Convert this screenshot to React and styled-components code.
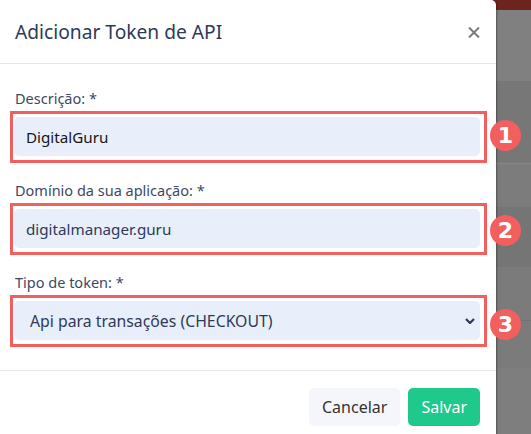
import React from 'react'
import styled, { createGlobalStyle } from 'styled-components'

const GlobalStyle = createGlobalStyle`
  html, body {
    margin: 0;
    padding: 0;
    overflow: hidden;
  }
  body {
    font-family: 'Noto Sans', 'Open Sans', sans-serif;
  }
`

const stripes = [
  { h: 10, c: '#6d231e' },
  { h: 71, c: '#808080' },
  { h: 82, c: '#777777' },
  { h: 1, c: '#858585' },
  { h: 43, c: '#7c7c7c' },
  { h: 60, c: '#757575' },
  { h: 53, c: '#7b7b7b' },
  { h: 1, c: '#727272' },
  { h: 47, c: '#7b7b7b' },
  { h: 66, c: '#7e7e7e' },
]

const fields = [
  { id: 1, label: 'Descrição: *', value: 'DigitalGuru', dark: true, badgeTop: 3 },
  { id: 2, label: 'Domínio da sua aplicação: *', value: 'digitalmanager.guru', badgeTop: 6 },
  { id: 3, label: 'Tipo de token: *', value: 'Api para transações (CHECKOUT)', select: true, badgeTop: 8 },
]

const App = () => {
  return (
    <Page>
      <GlobalStyle />
      <Backdrop>
        {stripes.map((s, i) => (
          <Stripe key={i} style={{ height: s.h, background: s.c }} />
        ))}
      </Backdrop>
      <Modal>
        <Header>
          <Title>Adicionar Token de API</Title>
          <Close aria-label='fechar'>
            <svg width='12' height='11' viewBox='0 0 12 11'>
              <path d='M1 0.5 L11 10.5 M11 0.5 L1 10.5' stroke='#7a7a7a' strokeWidth='2' />
            </svg>
          </Close>
        </Header>
        <Body>
          {fields.map((f) => (
            <Field key={f.id}>
              <Label>{f.label}</Label>
              <Control>
                {f.select ? (
                  <SelectBox role='combobox'>
                    <span>{f.value}</span>
                    <svg width='10' height='6' viewBox='0 0 10 6'>
                      <path d='M1 1 L5 5 L9 1' fill='none' stroke='#2e3a59' strokeWidth='2.2' />
                    </svg>
                  </SelectBox>
                ) : (
                  <Input readOnly defaultValue={f.value} $dark={f.dark} />
                )}
                <Highlight />
                <Badge $top={f.badgeTop}>{f.id}</Badge>
              </Control>
            </Field>
          ))}
        </Body>
        <Footer>
          <Button>Cancelar</Button>
          <Button $primary>Salvar</Button>
        </Footer>
      </Modal>
    </Page>
  )
}

const Page = styled.div`
  position: relative;
  width: 531px;
  height: 434px;
  overflow: hidden;
`
const Backdrop = styled.div`
  display: flex;
  flex-direction: column;
  width: 100%;
  height: 100%;
`
const Stripe = styled.div`
  flex: none;
  width: 100%;
`
const Modal = styled.div`
  position: absolute;
  top: 0;
  left: -2px;
  width: 498px;
  background: #ffffff;
  border-top-right-radius: 5px;
  box-shadow: 1px 0 2px rgba(0, 0, 0, 0.35);
`
const Header = styled.div`
  display: flex;
  align-items: center;
  justify-content: space-between;
  padding: 0 16px 0 17px;
  border-bottom: 1px solid #e4e4ee;
  box-sizing: border-box;
  height: 64px;
`
const Title = styled.h5`
  margin: 0;
  font-size: 19.2px;
  font-weight: 400;
  color: #2e3a59;
`
const Close = styled.button`
  border: none;
  background: none;
  padding: 0;
  display: flex;
  margin-top: 1px;
`
const Body = styled.div`
  display: flex;
  flex-direction: column;
  gap: 23px;
  padding: 23px 16px 30px;
`
const Field = styled.div`
  display: flex;
  flex-direction: column;
  gap: 8px;
`
const Label = styled.label`
  font-size: 14.5px;
  line-height: 22px;
  color: #3d4866;
  padding-left: 1px;
`
const Control = styled.div`
  position: relative;
  height: 39px;
`
const Input = styled.input`
  width: 100%;
  height: 100%;
  box-sizing: border-box;
  border: none;
  border-radius: 5px;
  background: #e8eefa;
  padding: 0 12px;
  font-family: inherit;
  font-size: 15.2px;
  color: ${(p) => (p.$dark ? '#161616' : '#2e3a59')};
  outline: none;
`
const SelectBox = styled.div`
  display: flex;
  align-items: center;
  justify-content: space-between;
  height: 100%;
  box-sizing: border-box;
  border-radius: 5px;
  background: #e8eefa;
  padding: 0 5px 0 16px;
  font-size: 15.8px;
  color: #2e3a59;
  svg {
    margin-top: 1px;
  }
`
const Highlight = styled.div`
  position: absolute;
  top: -6px;
  left: -4px;
  right: -7px;
  bottom: -7px;
  border: 3px solid #f25f5f;
  pointer-events: none;
`
const Badge = styled.div`
  position: absolute;
  left: calc(100% + 10px);
  top: ${(p) => p.$top}px;
  width: 31px;
  height: 31px;
  border-radius: 50%;
  background: #f25f5f;
  color: #ffffff;
  display: flex;
  align-items: center;
  justify-content: center;
  font-family: 'DejaVu Sans', sans-serif;
  font-weight: 700;
  font-size: 22px;
  line-height: 1;
`
const Footer = styled.div`
  display: flex;
  justify-content: flex-end;
  gap: 8px;
  border-top: 1px solid #e4e4ee;
  padding: 17px 16px 20px;
`
const Button = styled.button`
  height: 38px;
  padding: 0 13px;
  border: none;
  border-radius: 5px;
  font-family: inherit;
  font-size: 16px;
  background: ${(p) => (p.$primary ? '#1fc98b' : '#f5f6fb')};
  color: ${(p) => (p.$primary ? '#ffffff' : '#333333')};
`

export default App
